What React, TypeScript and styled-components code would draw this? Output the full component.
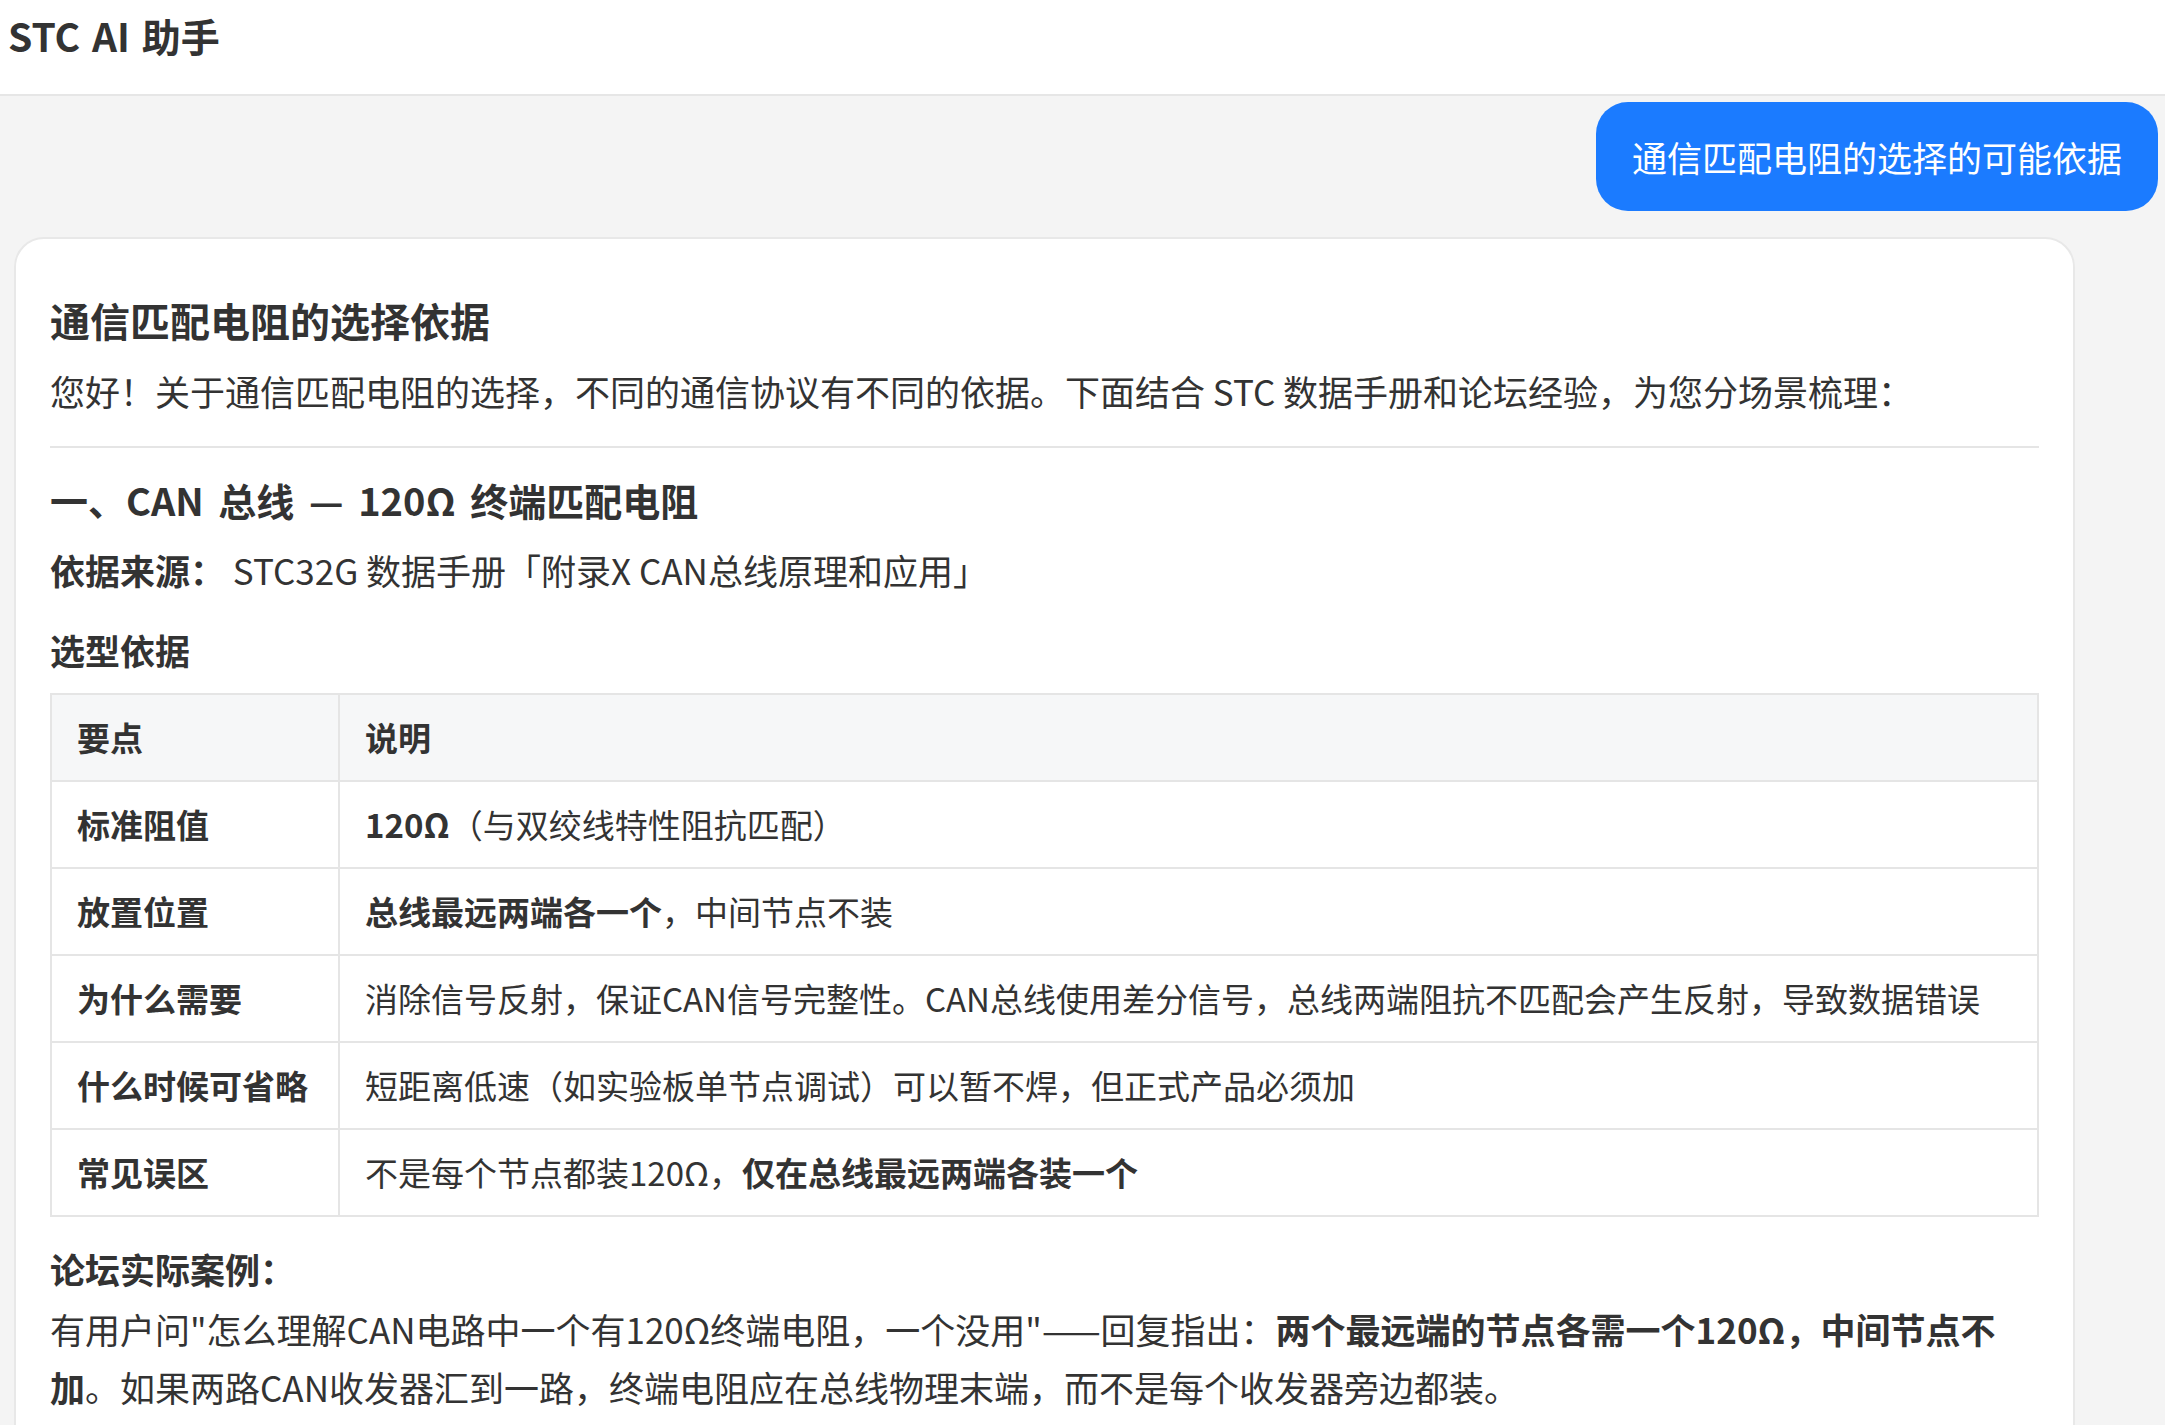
import React from "react";
import styled, { createGlobalStyle } from "styled-components";

const GlobalStyle = createGlobalStyle`
  html, body {
    margin: 0;
    padding: 0;
    background: #f4f4f4;
  }
  * { box-sizing: border-box; }
`;

const FONT = `"Noto Sans CJK SC", "Noto Sans", sans-serif`;

const Page = styled.div`
  min-height: 100vh;
  background: #f4f4f4;
  font-family: ${FONT};
  color: #333;
  overflow: hidden;
`;

const Header = styled.header`
  height: 96px;
  background: #fff;
  border-bottom: 2px solid #e6e6e6;
  padding: 0 8px;
  display: flex;
  align-items: flex-start;
`;

const Title = styled.h1`
  margin: 0;
  font-size: 39px;
  line-height: 70px;
  font-weight: 700;
  color: #333;
  word-spacing: 3px;
`;

const Messages = styled.main`
  display: flex;
  flex-direction: column;
  padding: 6px 7px 0;
  gap: 26px;
`;

const UserBubble = styled.div`
  align-self: flex-end;
  background: #1b7bff;
  color: #fff;
  border-radius: 32px;
  padding: 26px 36px;
  font-size: 35px;
  line-height: 57px;
`;

const AnswerCard = styled.article`
  margin-left: 7px;
  width: calc(100% - 90px);
  background: #fff;
  border: 2px solid #e8e8e8;
  border-radius: 30px;
  padding: 55px 34px 40px;
`;

const CardTitle = styled.h2`
  margin: 0 0 16px;
  font-size: 40px;
  line-height: 52px;
  font-weight: 700;
`;

const SectionTitle = styled.h3`
  margin: 0 0 15px;
  font-size: 38px;
  line-height: 52px;
  font-weight: 700;
  word-spacing: 6px;
`;

const Para = styled.p<{ $gap?: number }>`
  margin: 0 0 ${(p) => p.$gap ?? 0}px;
  font-size: 35px;
  line-height: 58px;
`;

const Label = styled.div<{ $gap?: number }>`
  margin: 0 0 ${(p) => p.$gap ?? 0}px;
  font-size: 35px;
  line-height: 58px;
  font-weight: 700;
`;

const Divider = styled.hr`
  border: none;
  height: 2px;
  background: #e5e5e5;
  margin: 26px 0 26px;
`;

const Table = styled.table`
  width: 100%;
  border-collapse: collapse;
  margin: 0 0 23px;
  font-size: 33px;
`;

const HeadCell = styled.th`
  background: #f6f7f8;
  border: 2px solid #e5e5e5;
  text-align: left;
  font-weight: 700;
  padding: 16px 25px;
  line-height: 53px;
`;

const Cell = styled.td<{ $bold?: boolean }>`
  border: 2px solid #e5e5e5;
  padding: 16px 25px;
  line-height: 53px;
  font-weight: ${(p) => (p.$bold ? 700 : 400)};
`;

const rows: { key: string; desc: React.ReactNode }[] = [
  {
    key: "标准阻值",
    desc: (
      <>
        <strong>120Ω</strong>（与双绞线特性阻抗匹配）
      </>
    ),
  },
  {
    key: "放置位置",
    desc: (
      <>
        <strong>总线最远两端各一个</strong>，中间节点不装
      </>
    ),
  },
  {
    key: "为什么需要",
    desc: "消除信号反射，保证CAN信号完整性。CAN总线使用差分信号，总线两端阻抗不匹配会产生反射，导致数据错误",
  },
  {
    key: "什么时候可省略",
    desc: "短距离低速（如实验板单节点调试）可以暂不焊，但正式产品必须加",
  },
  {
    key: "常见误区",
    desc: (
      <>
        不是每个节点都装120Ω，<strong>仅在总线最远两端各装一个</strong>
      </>
    ),
  },
];

export default function App() {
  return (
    <Page>
      <GlobalStyle />
      <Header>
        <Title>STC AI 助手</Title>
      </Header>
      <Messages>
        <UserBubble>通信匹配电阻的选择的可能依据</UserBubble>
        <AnswerCard>
          <CardTitle>通信匹配电阻的选择依据</CardTitle>
          <Para>
            您好！关于通信匹配电阻的选择，不同的通信协议有不同的依据。下面结合 STC 数据手册和论坛经验，为您分场景梳理：
          </Para>
          <Divider />
          <SectionTitle>一、CAN 总线 — 120Ω 终端匹配电阻</SectionTitle>
          <Para $gap={22}>
            <strong>依据来源：</strong> STC32G 数据手册「附录X CAN总线原理和应用」
          </Para>
          <Label $gap={14}>选型依据</Label>
          <Table>
            <colgroup>
              <col style={{ width: "288px" }} />
              <col />
            </colgroup>
            <thead>
              <tr>
                <HeadCell>要点</HeadCell>
                <HeadCell>说明</HeadCell>
              </tr>
            </thead>
            <tbody>
              {rows.map((r) => (
                <tr key={r.key}>
                  <Cell $bold>{r.key}</Cell>
                  <Cell>{r.desc}</Cell>
                </tr>
              ))}
            </tbody>
          </Table>
          <Label $gap={2}>论坛实际案例：</Label>
          <Para>
            有用户问"怎么理解CAN电路中一个有120Ω终端电阻，一个没用"——回复指出：
            <strong>两个最远端的节点各需一个120Ω，中间节点不加</strong>。如果两路CAN收发器汇到一路，终端电阻应在总线物理末端，而不是每个收发器旁边都装。
          </Para>
        </AnswerCard>
      </Messages>
    </Page>
  );
}
